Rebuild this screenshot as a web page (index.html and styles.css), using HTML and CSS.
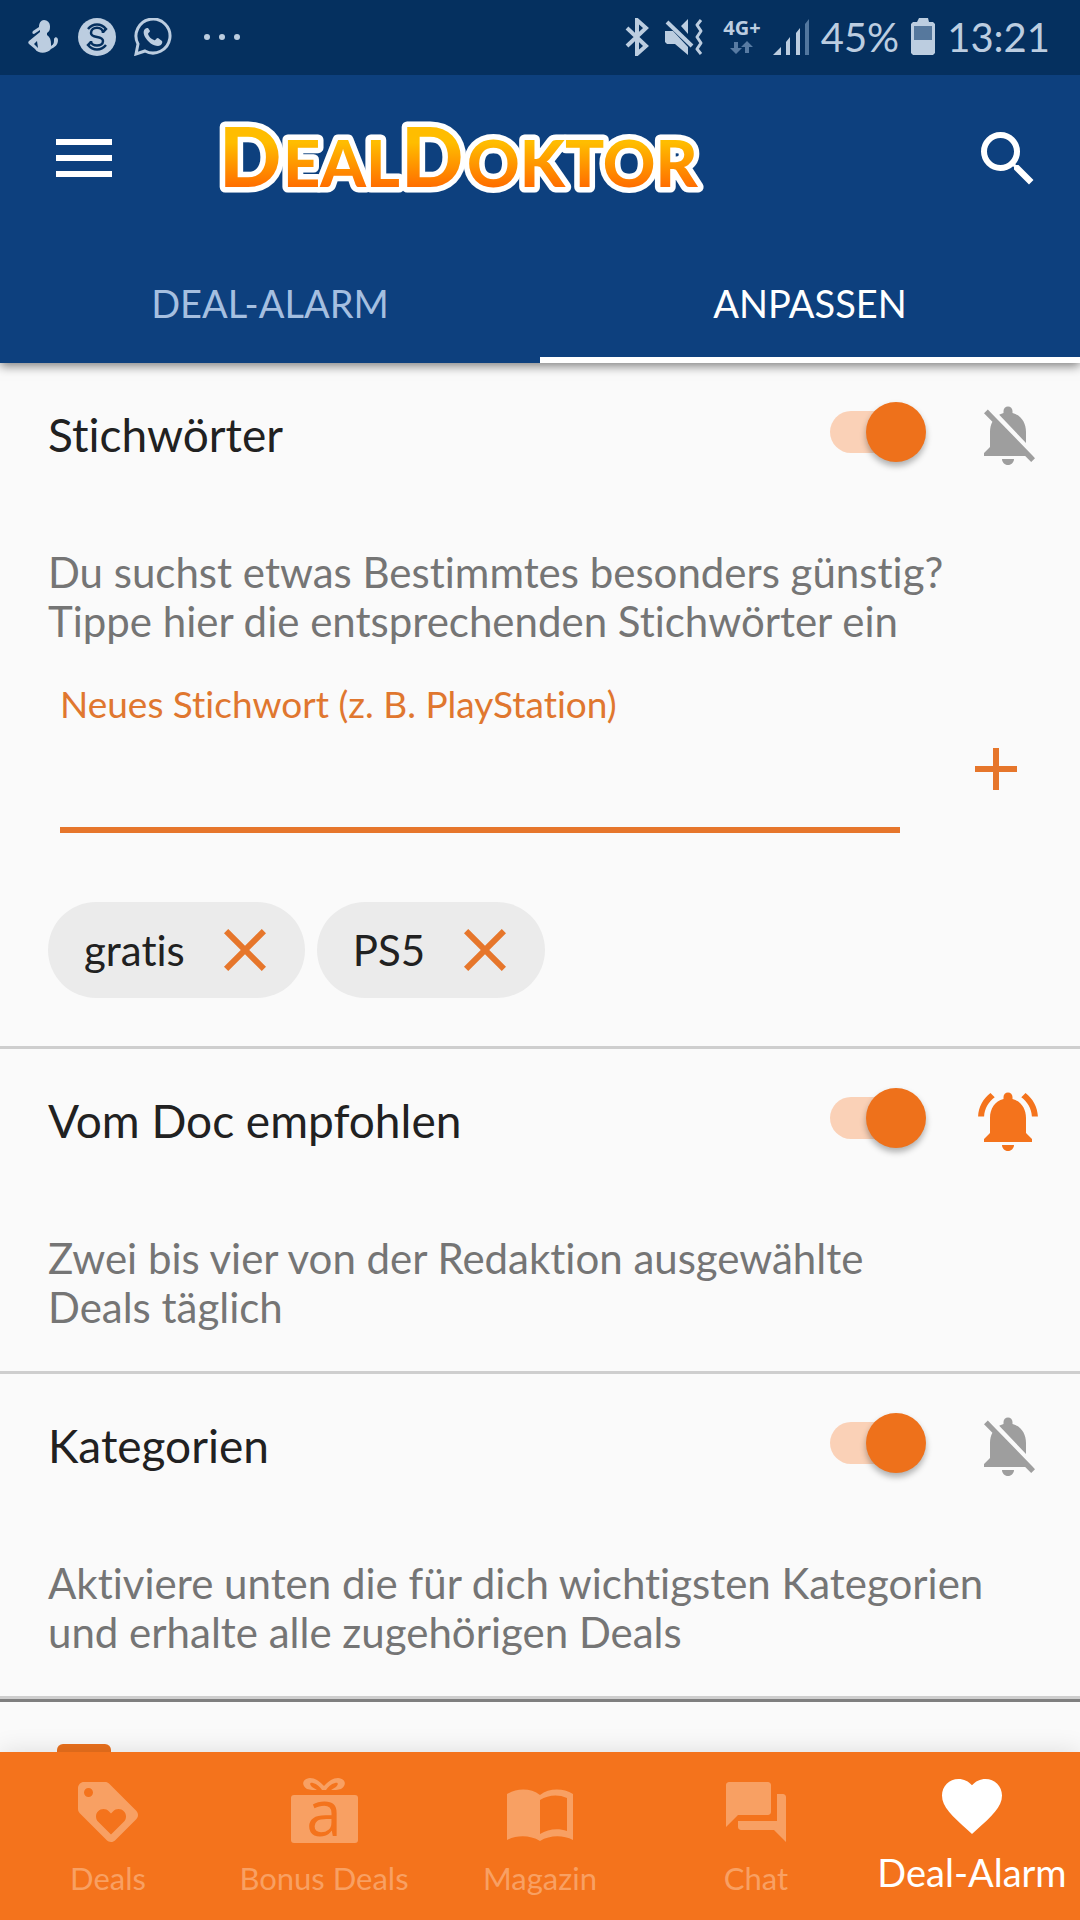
FILE: index.html
```html
<!DOCTYPE html>
<html lang="de">
<head>
<meta charset="utf-8">
<meta name="viewport" content="width=device-width, initial-scale=1">
<title>DealDoktor – Deal-Alarm anpassen</title>
<link rel="stylesheet" href="styles.css">
</head>
<body>
<div class="app">
  <div class="status">
    <div class="status-left">
      <svg width="32" height="38" viewBox="0 0 32 38" fill="currentColor" aria-hidden="true">
        <path d="M16 2a6 6 0 0 1 6 6c0 3 0 5-3 7v2c3 2 4 5 4 9v2c3-2 3-3 3-7 1-3 4-2 4 1 0 5-3 7-7 9-4 5-13 5-16 0l-6-5c-1-1-1-2 0-3l11-9v-2l-6 4c-2 0-2-2-1-3l6-4c0-4 2-7 5-7zM9 23l-3 3 4 4z" fill-rule="evenodd"/>
      </svg>
      <svg width="38" height="38" viewBox="0 0 38 38" aria-hidden="true">
        <circle cx="19" cy="19" r="19" fill="currentColor"/>
        <g fill="none" stroke="#05305f" stroke-width="2.500">
          <path d="M25 15c0-7-12-7-12 0 0 6 12 2 12 8 0 6-12 6-12 0"/>
          <path d="M10 11c5-6 13-6 18 0l-3 3M28 27c-5 6-13 6-18 0l3-3"/>
        </g>
      </svg>
      <svg width="38" height="38" viewBox="0 0 38 38" aria-hidden="true">
        <path d="M2 36l2-10a17 17 0 1 1 7 7z" fill="none" stroke="currentColor" stroke-width="3"/>
        <path d="M13 10c-4 1-4 5-2 9 3 5 8 9 13 9 3 0 5-3 4-5l-4-3c-2 0-2 3-4 2-3-1-5-3-6-6 0-1 2-2 2-3l-2-3z" fill="currentColor"/>
      </svg>
      <svg class="status-dots" width="36" height="38" viewBox="0 0 36 38" fill="currentColor" aria-hidden="true">
        <circle cx="3" cy="19" r="3"/><circle cx="18" cy="19" r="3"/><circle cx="33" cy="19" r="3"/>
      </svg>
    </div>
    <div class="status-right">
      <svg class="status-bt" width="24" height="38" viewBox="0 0 24 38" aria-hidden="true">
        <path d="M2 10l19 18-9 8V2l9 8L2 28" fill="none" stroke="currentColor" stroke-width="4"/>
      </svg>
      <svg class="status-mute" width="38" height="38" viewBox="0 0 38 38" aria-hidden="true">
        <path d="M0 13h8L23 29v8L10 26H2l-2-2zM16 8l7-7v15z" fill="currentColor"/>
        <path d="M2 4l25 24" fill="none" stroke="currentColor" stroke-width="4"/>
        <path d="M36 2l-4 5 4 6-4 6 4 6-4 6 4 5" fill="none" stroke="currentColor" stroke-width="3" stroke-linejoin="round"/>
      </svg>
      <div class="network">
        <span>4G+</span>
        <svg width="24" height="14" viewBox="0 0 24 14" fill="#587ba3" aria-hidden="true">
          <path d="M4 1h4v6h4l-6 6-6-6h4zM15 12h4V6h4l-6-6-6 6h4z"/>
        </svg>
      </div>
      <svg width="36" height="38" viewBox="0 0 36 38" fill="currentColor" aria-hidden="true">
        <path d="M0 37l8-8v8zM13 24l4-5v18h-4zM23 15l4-5v27h-4z"/>
        <path d="M32 6l4-5v36h-4z" fill="#52779f"/>
      </svg>
      <span class="status-text">45%</span>
      <svg width="24" height="38" viewBox="0 0 24 38" aria-hidden="true">
        <path d="M2 4h4l2-4h9l1 4h4l2 2v29l-2 2H2l-2-2V6z" fill="currentColor"/>
        <path d="M3 8h18v14H3z" fill="#56789d"/>
      </svg>
      <span class="status-text">13:21</span>
    </div>
  </div>

  <header class="header">
    <div class="toolbar">
      <button class="icon-button" type="button" aria-label="Menü">
        <svg width="72" height="72" viewBox="0 0 72 72" fill="#fff" aria-hidden="true"><path d="M8 16h56v6H8zM8 32h56v6H8zM8 48h56v6H8z"/></svg>
      </button>
      <svg class="logo" width="520" height="100" viewBox="0 0 520 100" role="img" aria-label="DealDoktor">
        <defs>
          <linearGradient id="logo-fill" gradientUnits="userSpaceOnUse" x1="0" y1="22" x2="0" y2="80">
            <stop offset="0.200" stop-color="#ffbd00"/><stop offset="1" stop-color="#ff6a00"/>
          </linearGradient>
        </defs>
        <text class="logo-text" y="78"><tspan class="logo-cap" x="11">D</tspan><tspan x="75">EAL</tspan><tspan class="logo-cap" x="193">D</tspan><tspan x="259">OKTOR</tspan></text>
      </svg>
      <button class="icon-button" type="button" aria-label="Suche">
        <svg width="72" height="72" viewBox="0 0 24 24" fill="#fff" aria-hidden="true"><path d="M15.500 14h-.79l-.28-.27A6.471 6.471 0 0 0 16 9.500 6.500 6.500 0 1 0 9.500 16c1.610 0 3.090-.59 4.230-1.570l.27.28v.79l5 4.990L20.490 19l-4.990-5zm-6 0C7.010 14 5 11.990 5 9.500S7.010 5 9.500 5 14 7.010 14 9.500 11.990 14 9.500 14z"/></svg>
      </button>
    </div>
    <nav class="tabs" aria-label="Ansicht">
      <a class="tab" href="#alarm">DEAL-ALARM</a>
      <a class="tab tab-active" href="#anpassen" aria-current="page">ANPASSEN</a>
    </nav>
  </header>

  <main class="content" id="anpassen">
    <section class="section">
      <div class="section-head">
        <h2 class="title"><label for="sw-keywords">Stichwörter</label></h2>
        <input class="switch" id="sw-keywords" type="checkbox" role="switch" checked>
        <button class="icon-button" type="button" aria-label="Benachrichtigung einschalten">
          <svg width="72" height="72" viewBox="0 0 24 24" fill="#9e9e9e" aria-hidden="true"><path d="M20 18.690L7.840 6.140 5.270 3.490 4 4.760l2.800 2.800v.01c-.52.99-.8 2.160-.8 3.420v5l-2 2v1h13.730l2 2L21 19.720l-1-1.030zM12 22c1.110 0 2-.89 2-2h-4c0 1.110.89 2 2 2zm6-7.320V11c0-3.080-1.640-5.640-4.500-6.320V4c0-.83-.67-1.500-1.500-1.500s-1.500.67-1.500 1.500v.68c-.15.03-.29.08-.42.12-.1.03-.2.07-.3.11-.24.09-.48.2-.72.33L18 14.680z"/></svg>
        </button>
      </div>
      <p class="description">Du suchst etwas Bestimmtes besonders günstig?<br>Tippe hier die entsprechenden Stichwörter ein</p>
      <form class="keyword-form">
        <div class="field">
          <label class="field-label" for="keyword">Neues Stichwort (z. B. PlayStation)</label>
          <input class="field-input" id="keyword" type="text">
        </div>
        <button class="icon-button add-button" type="button" aria-label="Stichwort hinzufügen">
          <svg width="72" height="72" viewBox="0 0 24 24" fill="#e6762b" aria-hidden="true"><path d="M19 13h-6v6h-2v-6H5v-2h6V5h2v6h6z"/></svg>
        </button>
      </form>
      <ul class="chips">
        <li class="chip">gratis
          <button class="icon-button" type="button" aria-label="gratis entfernen">
            <svg width="72" height="72" viewBox="0 0 24 24" fill="#e6762b" aria-hidden="true"><path d="M19 6.410L17.590 5 12 10.590 6.410 5 5 6.410 10.590 12 5 17.590 6.410 19 12 13.410 17.590 19 19 17.590 13.410 12z"/></svg>
          </button>
        </li>
        <li class="chip">PS5
          <button class="icon-button" type="button" aria-label="PS5 entfernen">
            <svg width="72" height="72" viewBox="0 0 24 24" fill="#e6762b" aria-hidden="true"><path d="M19 6.410L17.590 5 12 10.590 6.410 5 5 6.410 10.590 12 5 17.590 6.410 19 12 13.410 17.590 19 19 17.590 13.410 12z"/></svg>
          </button>
        </li>
      </ul>
    </section>

    <section class="section">
      <div class="section-head">
        <h2 class="title"><label for="sw-doc">Vom Doc empfohlen</label></h2>
        <input class="switch" id="sw-doc" type="checkbox" role="switch" checked>
        <button class="icon-button" type="button" aria-label="Benachrichtigung ausschalten">
          <svg width="72" height="72" viewBox="0 0 24 24" fill="#f4731c" aria-hidden="true"><path d="M7.580 4.080L6.150 2.650C3.750 4.480 2.170 7.300 2.030 10.500h2c.15-2.650 1.510-4.970 3.550-6.420zm12.390 6.420h2c-.15-3.200-1.730-6.020-4.120-7.850l-1.420 1.430c2.020 1.450 3.390 3.770 3.540 6.420zM18 11c0-3.070-1.640-5.640-4.500-6.320V4c0-.83-.67-1.500-1.500-1.500s-1.500.67-1.500 1.500v.68C7.630 5.360 6 7.920 6 11v5l-2 2v1h16v-1l-2-2v-5zm-6 11c1.110 0 2-.89 2-2h-4c0 1.110.89 2 2 2z"/></svg>
        </button>
      </div>
      <p class="description">Zwei bis vier von der Redaktion ausgewählte<br>Deals täglich</p>
    </section>

    <section class="section">
      <div class="section-head">
        <h2 class="title"><label for="sw-categories">Kategorien</label></h2>
        <input class="switch" id="sw-categories" type="checkbox" role="switch" checked>
        <button class="icon-button" type="button" aria-label="Benachrichtigung einschalten">
          <svg width="72" height="72" viewBox="0 0 24 24" fill="#9e9e9e" aria-hidden="true"><path d="M20 18.690L7.840 6.140 5.270 3.490 4 4.760l2.800 2.800v.01c-.52.99-.8 2.160-.8 3.420v5l-2 2v1h13.730l2 2L21 19.720l-1-1.030zM12 22c1.110 0 2-.89 2-2h-4c0 1.110.89 2 2 2zm6-7.320V11c0-3.080-1.640-5.640-4.500-6.320V4c0-.83-.67-1.500-1.500-1.500s-1.500.67-1.500 1.500v.68c-.15.03-.29.08-.42.12-.1.03-.2.07-.3.11-.24.09-.48.2-.72.33L18 14.680z"/></svg>
        </button>
      </div>
      <p class="description">Aktiviere unten die für dich wichtigsten Kategorien<br>und erhalte alle zugehörigen Deals</p>
    </section>

    <div class="category">
      <input class="category-check" type="checkbox" checked aria-label="Kategorie">
    </div>
  </main>

  <nav class="bottom-nav" aria-label="Hauptnavigation">
    <a class="nav-item" href="#deals">
      <svg width="72" height="72" viewBox="0 0 24 24" fill="currentColor" aria-hidden="true"><path d="M21.410 11.580l-9-9C12.050 2.220 11.550 2 11 2H4c-1.100 0-2 .9-2 2v7c0 .55.22 1.050.59 1.420l9 9c.36.36.86.58 1.410.58.55 0 1.050-.22 1.410-.59l7-7c.37-.36.59-.86.59-1.410 0-.55-.23-1.060-.59-1.420zM5.500 7C4.670 7 4 6.330 4 5.500S4.670 4 5.500 4 7 4.670 7 5.500 6.330 7 5.500 7zm11.770 8.270L13 19.540l-4.270-4.270C8.280 14.810 8 14.190 8 13.500c0-1.380 1.120-2.500 2.500-2.500.69 0 1.320.28 1.770.74l.73.72.73-.73c.45-.45 1.080-.73 1.770-.73 1.380 0 2.500 1.120 2.500 2.500 0 .69-.28 1.320-.73 1.770z"/></svg>
      <span>Deals</span>
    </a>
    <a class="nav-item" href="#bonus">
      <svg class="gift" width="72" height="72" viewBox="0 0 72 72" aria-hidden="true">
        <rect x="3" y="19" width="67" height="48" rx="3" fill="currentColor"/>
        <path d="M24 14l-5-1c-6-4-5-10 3-11 6 0 10 4 14 8 4-4 8-8 14-8 8 1 9 7 3 11l-5 1h-5l5-3c3-3 2-5-1-4-4 1-7 4-9 7h-4c-2-3-5-6-9-7-3-1-4 1-1 4l5 3z" fill="currentColor"/>
        <text class="gift-letter" x="36" y="60" text-anchor="middle">a</text>
      </svg>
      <span>Bonus Deals</span>
    </a>
    <a class="nav-item" href="#magazin">
      <svg width="72" height="72" viewBox="0 0 72 72" aria-hidden="true">
        <path d="M3 18c10-6 24-6 33 1 9-7 23-7 33-1v46c-10-5-23-5-33 1-10-6-23-6-33-1zM36 24v34c8-5 18-6 27-3V22c-9-4-19-3-27 2z" fill="currentColor" fill-rule="evenodd"/>
      </svg>
      <span>Magazin</span>
    </a>
    <a class="nav-item" href="#chat">
      <svg width="72" height="72" viewBox="0 0 24 24" fill="currentColor" aria-hidden="true"><path d="M22 7c0-.55-.45-1-1-1h-2v9H6v2c0 .55.45 1 1 1h11l4 4zM17 12V3c0-.55-.45-1-1-1H3c-.55 0-1 .45-1 1v14l4-4h10c.55 0 1-.45 1-1z"/></svg>
      <span>Chat</span>
    </a>
    <a class="nav-item nav-active" href="#alarm" aria-current="page">
      <svg width="72" height="72" viewBox="0 0 24 24" fill="currentColor" aria-hidden="true"><path d="M12 21.350l-1.450-1.320C5.400 15.360 2 12.280 2 8.500 2 5.420 4.420 3 7.500 3c1.740 0 3.410.81 4.500 2.090C13.090 3.810 14.760 3 16.500 3 19.580 3 22 5.420 22 8.500c0 3.780-3.400 6.860-8.550 11.540L12 21.350z"/></svg>
      <span>Deal-Alarm</span>
    </a>
  </nav>
</div>
</body>
</html>
```
FILE: styles.css
```css
* { box-sizing: border-box; }

body {
  margin: 0;
  background: #fafafa;
  color: #212121;
  font-family: Lato, "Open Sans", sans-serif;
  font-variant-ligatures: none;
}

svg { display: block; flex: none; }

.app {
  display: flex;
  flex-direction: column;
  height: 100vh;
  overflow: hidden;
}

/* Status bar */
.status {
  position: relative;
  z-index: 2;
  display: flex;
  flex: none;
  align-items: center;
  justify-content: space-between;
  height: 75px;
  padding: 0 30px 2px 28px;
  background: #05305f;
  color: #bccde0;
}
.status-left { display: flex; align-items: center; gap: 18px; }
.status-dots { margin-left: 14px; }
.status-right { display: flex; align-items: center; gap: 12px; }
.status-bt { margin-right: 4px; }
.status-mute { margin-right: 8px; }
.network {
  display: flex;
  flex-direction: column;
  align-items: center;
  gap: 4px;
  font: bold 20px/18px "Open Sans", sans-serif;
}
.status-text { font-size: 40px; line-height: 48px; }

/* Blue header */
.header {
  position: relative;
  z-index: 1;
  flex: none;
  background: #0d407e;
  box-shadow: 0 3px 10px rgba(0, 0, 0, 0.5);
}
.toolbar {
  display: flex;
  align-items: center;
  height: 168px;
  padding: 0 36px 0 48px;
}
.logo { margin: 0 auto 0 88px; overflow: visible; }
.logo-text {
  font-size: 65px;
  font-weight: 900;
  fill: url(#logo-fill);
  stroke: #fff;
  stroke-width: 11px;
  stroke-linejoin: round;
  paint-order: stroke;
}
.logo-cap { font-size: 82px; }

.tabs { display: grid; grid-template-columns: 1fr 1fr; }
.tab {
  display: flex;
  align-items: center;
  justify-content: center;
  height: 120px;
  border-top: 6px solid transparent;
  border-bottom: 6px solid transparent;
  color: #a5bfe0;
  font-size: 38px;
  text-decoration: none;
}
.tab-active { border-bottom-color: #fff; color: #fff; }

.icon-button {
  flex: none;
  width: 72px;
  height: 72px;
  padding: 0;
  border: 0;
  background: none;
  cursor: pointer;
}

/* Settings */
.content { flex: 1; min-height: 0; overflow-y: auto; scrollbar-width: none; }
.section {
  padding: 36px 36px 39px 48px;
  border-bottom: 3px solid #cecece;
}
.section-head { display: flex; align-items: center; }
.title {
  flex: 1;
  margin: 0;
  font-size: 46px;
  font-weight: 400;
  line-height: 56px;
}

.switch {
  position: relative;
  width: 96px;
  height: 60px;
  margin: 0 46px 6px 0;
  appearance: none;
  cursor: pointer;
}
.switch::before {
  content: "";
  position: absolute;
  inset: 9px 6px 9px 0;
  border-radius: 21px;
  background: #fad1b7;
}
.switch::after {
  content: "";
  position: absolute;
  inset: 0 0 0 auto;
  width: 60px;
  border-radius: 50%;
  background: #ee711b;
  box-shadow: 0 4px 6px rgba(0, 0, 0, 0.3);
}

.description {
  margin: 77px 0 0;
  color: #757575;
  font-size: 42px;
  line-height: 49px;
  white-space: nowrap;
}

.keyword-form {
  display: flex;
  align-items: flex-end;
  gap: 60px;
  margin-top: 36px;
  padding: 0 12px;
}
.field { flex: 1; }
.field-label {
  display: block;
  color: #e0772f;
  font-size: 37px;
  line-height: 44px;
}
.field-input {
  display: block;
  width: 100%;
  height: 107px;
  padding: 24px 0 0;
  border: 0;
  border-bottom: 6px solid #e6762b;
  outline: 0;
  background: none;
  color: inherit;
  font: inherit;
  font-size: 46px;
}
.add-button { margin-bottom: 28px; }

.chips {
  display: flex;
  gap: 12px;
  margin: 69px 0 9px;
  padding: 0;
  list-style: none;
}
.chip {
  display: flex;
  align-items: center;
  gap: 24px;
  height: 96px;
  padding: 0 24px 0 36px;
  border-radius: 48px;
  background: #ebebeb;
  font-size: 42px;
}

.category { padding: 42px 57px; border-top: 3px solid #7f7f7f; }
.category-check {
  display: block;
  width: 54px;
  height: 54px;
  margin: 0;
  appearance: none;
  border-radius: 6px;
  background: #ea701c;
}

/* Bottom navigation */
.bottom-nav {
  position: relative;
  display: grid;
  flex: none;
  grid-template-columns: repeat(5, 1fr);
  height: 168px;
  background: #f4731c;
  box-shadow: 0 0 24px rgba(0, 0, 0, 0.12);
}
.nav-item {
  display: flex;
  flex-direction: column;
  align-items: center;
  gap: 10px;
  padding-top: 24px;
  color: #f8a063;
  font-size: 31px;
  line-height: 40px;
  text-decoration: none;
  white-space: nowrap;
}
.nav-active { padding-top: 18px; color: #fff; font-size: 38px; }
.gift { overflow: visible; }
.gift-letter {
  fill: #f4731c;
  font: 64px/64px "Open Sans", sans-serif;
}
```
